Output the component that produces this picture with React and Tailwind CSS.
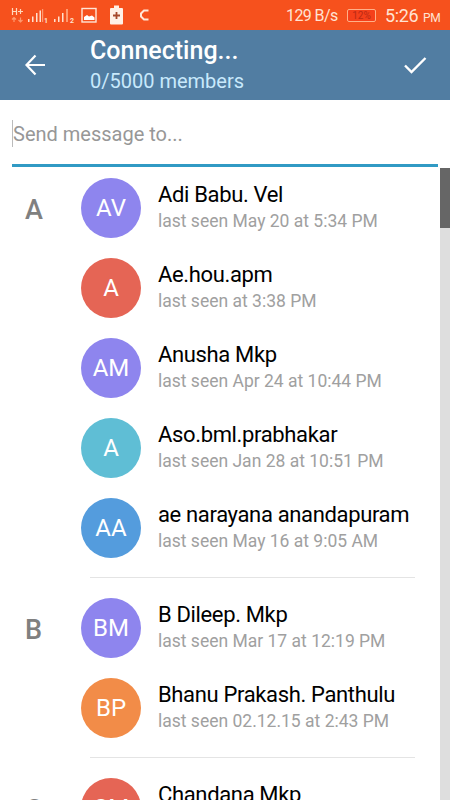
const groups = [
  {
    letter: 'A',
    people: [
      { initials: 'AV', name: 'Adi Babu. Vel', seen: 'last seen May 20 at 5:34 PM', color: 'bg-[#8e85ee]' },
      { initials: 'A', name: 'Ae.hou.apm', seen: 'last seen at 3:38 PM', color: 'bg-[#e56555]' },
      { initials: 'AM', name: 'Anusha Mkp', seen: 'last seen Apr 24 at 10:44 PM', color: 'bg-[#8e85ee]' },
      { initials: 'A', name: 'Aso.bml.prabhakar', seen: 'last seen Jan 28 at 10:51 PM', color: 'bg-[#5fbed5]' },
      { initials: 'AA', name: 'ae narayana anandapuram', seen: 'last seen May 16 at 9:05 AM', color: 'bg-[#549cdd]' },
    ],
  },
  {
    letter: 'B',
    people: [
      { initials: 'BM', name: 'B Dileep. Mkp', seen: 'last seen Mar 17 at 12:19 PM', color: 'bg-[#8e85ee]' },
      { initials: 'BP', name: 'Bhanu Prakash. Panthulu', seen: 'last seen 02.12.15 at 2:43 PM', color: 'bg-[#f28c48]' },
    ],
  },
  {
    letter: 'C',
    people: [
      { initials: 'CM', name: 'Chandana Mkp', seen: '', color: 'bg-[#e56555]' },
    ],
  },
];

function StatusIcons() {
  return (
    <svg width="160" height="30" viewBox="0 0 160 30" className="shrink-0" fill="none">
      <g stroke="#ffd9bd" strokeWidth="1.2">
        <path d="M12.5 8v7M16.5 8v7M12.5 11.5h4M18 11.5h5M20.5 9v5" />
      </g>
      <g stroke="#ff9a70" strokeWidth="1.2">
        <path d="M14 22v-4.500M12 19.500l2-2 2 2M20.500 17.500v4.500M18.500 20l2 2 2-2" />
      </g>
      <g fill="#ffe1cf">
        <path d="M28 19h1.500v3H28zM32 16.500h1.500V22H32zM36 13h1.500v9H36zM39.500 10.500H41V22h-1.500z" />
        <path d="M54 19h1.500v3H54zM58 16.500h1.500V22H58zM62 13h1.500v9H62z" />
      </g>
      <path d="M42 9h1.200v13H42zM66 9h2v13h-2z" fill="#ff9a70" />
      <text x="44" y="23" fontSize="7" fontWeight="700" fill="#ffe1cf" className="font-['Roboto',sans-serif]">1</text>
      <text x="70" y="23" fontSize="7" fontWeight="700" fill="#ffe1cf" className="font-['Roboto',sans-serif]">2</text>
      <rect x="82" y="8.500" width="14" height="13.500" stroke="#ffe5d6" strokeWidth="1.400" />
      <path d="M84 20v-3l3-2 2 1.500 3-1 2.500 2V20z" fill="#fff" />
      <path d="M114 5.500h5V8h3q1 0 1 1v14.500q0 1-1 1h-11q-1 0-1-1V9q0-1 1-1h3z" fill="#fff0e6" />
      <path d="M116.500 12v7M113 15.500h7" stroke="#a5482b" strokeWidth="1.800" />
      <path d="M148.500 10.500h-4.500l-3 3v3l3 3h4.500" stroke="#ffe5d6" strokeWidth="2" />
    </svg>
  );
}

function Contact({ person }) {
  return (
    <div className="flex h-20 items-center">
      <div className={`flex size-[60px] shrink-0 items-center justify-center rounded-full text-[24px] text-white ${person.color}`}>
        {person.initials}
      </div>
      <div className="ml-[17px] whitespace-nowrap">
        <div className="h-[28px] text-[22px] leading-[28px] tracking-[-0.35px] text-black">{person.name}</div>
        <div className="h-[26px] text-[17.5px] leading-[25px] text-[#a0a0a0]">{person.seen}</div>
      </div>
    </div>
  );
}

export default function App() {
  return (
    <div className="flex h-[800px] w-[450px] flex-col overflow-hidden bg-white font-['Roboto',sans-serif]">
      <div className="flex h-[30px] shrink-0 items-center bg-[#f6511d] text-[#ffe3d3]">
        <StatusIcons />
        <div className="ml-[126px] w-[58px] whitespace-nowrap pt-0.5 text-[16px] tracking-[-0.6px]">129 B/s</div>
        <div className="ml-[3px] flex h-[13px] w-[29px] items-center justify-center rounded-[2px] border border-[#ffb088] bg-[#f5401b] text-[10px] text-[#b92a15]">12%</div>
        <div className="ml-[9px] flex items-baseline gap-[5px] whitespace-nowrap text-[18px] tracking-[-0.4px]">5:26 <span className="text-[12px]">PM</span></div>
      </div>

      <header className="flex h-[70px] shrink-0 items-center bg-[#517da2] text-white">
        <svg width="90" height="70" viewBox="0 0 90 70" fill="none" stroke="white" strokeWidth="2.200" className="shrink-0">
          <path d="M45 35H27M35.500 25.500L26.500 35l9 9.500" />
        </svg>
        <div className="flex-1 whitespace-nowrap pt-0.5">
          <div className="text-[25px] font-medium leading-[30px]">Connecting...</div>
          <div className="text-[20px] leading-[30px] text-[#c8e9fc]">0/5000 members</div>
        </div>
        <svg width="50" height="70" viewBox="0 0 50 70" fill="none" stroke="white" strokeWidth="2.400" className="shrink-0">
          <path d="M5 35.500l6.500 6.500L25.500 28" />
        </svg>
      </header>

      <div className="h-[68px] shrink-0 px-3">
        <div className="flex h-[67px] items-center border-b-[3px] border-[#319ac4] pt-[3px]">
          <span className="h-[27px] w-px bg-[#bbb]" />
          <span className="text-[20px] text-[#979797]">Send message to...</span>
        </div>
      </div>

      <main className="flex min-h-0 flex-1">
        <div className="flex-1 overflow-hidden">
          {groups.map((group, index) => (
            <section key={group.letter}>
              {index > 0 && <div className="ml-[90px] mr-[25px] h-5 pt-[9px]"><div className="h-px bg-[#e4e4e4]" /></div>}
              <div className="flex">
                <div className="flex h-20 w-[81px] shrink-0 items-center pl-[25px] pt-1 text-[27px] font-medium text-[#808080]">{group.letter}</div>
                <div>
                  {group.people.map((person) => <Contact key={person.name} person={person} />)}
                </div>
              </div>
            </section>
          ))}
        </div>
        <div className="w-[10px] shrink-0 bg-[#dedede]"><div className="h-[60px] bg-[#666]" /></div>
      </main>
    </div>
  );
}
